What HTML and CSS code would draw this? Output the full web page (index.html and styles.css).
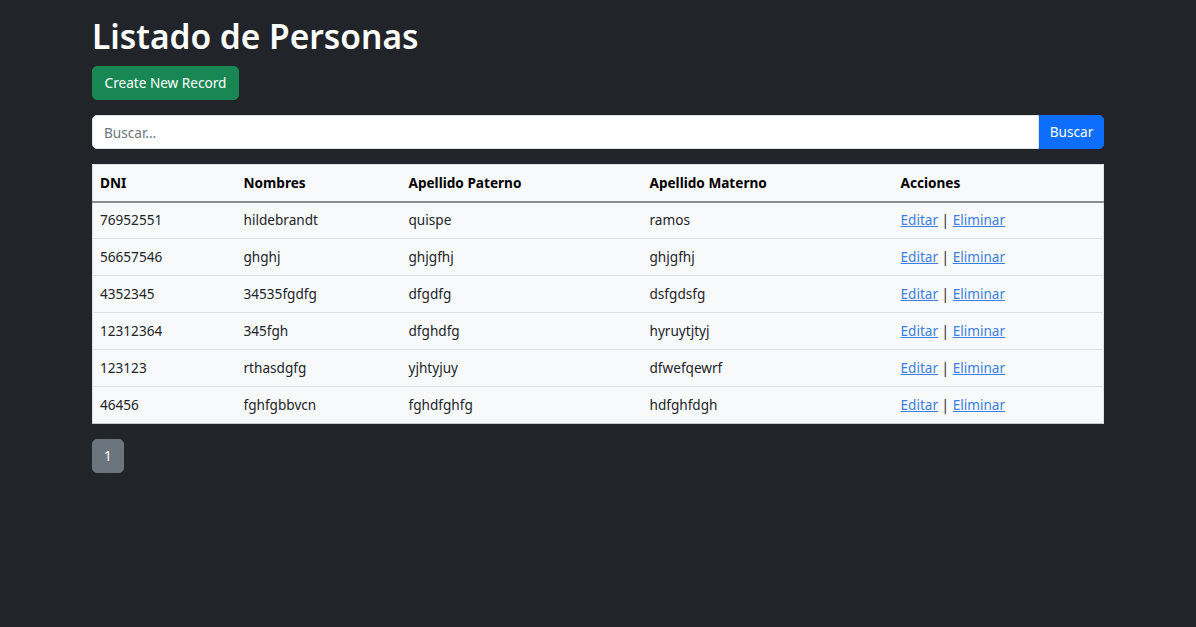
FILE: index.html
```html
<!DOCTYPE html>
<html lang="es">
<head>
<meta charset="utf-8">
<title>Listado de Personas</title>
<link rel="stylesheet" href="styles.css">
</head>
<body>
<div class="container">
  <h1 class="title">Listado de Personas</h1>
  <button class="btn btn-success">Create New Record</button>
  <form class="search">
    <input class="search-input" type="text" placeholder="Buscar...">
    <button class="btn btn-primary search-btn" type="button">Buscar</button>
  </form>
  <table class="table">
    <thead>
      <tr>
        <th class="c1">DNI</th>
        <th class="c2">Nombres</th>
        <th class="c3">Apellido Paterno</th>
        <th class="c4">Apellido Materno</th>
        <th class="c5">Acciones</th>
      </tr>
    </thead>
    <tbody>
      <tr><td>76952551</td><td>hildebrandt</td><td>quispe</td><td>ramos</td><td><a href="#">Editar</a> | <a href="#">Eliminar</a></td></tr>
      <tr><td>56657546</td><td>ghghj</td><td>ghjgfhj</td><td>ghjgfhj</td><td><a href="#">Editar</a> | <a href="#">Eliminar</a></td></tr>
      <tr><td>4352345</td><td>34535fgdfg</td><td>dfgdfg</td><td>dsfgdsfg</td><td><a href="#">Editar</a> | <a href="#">Eliminar</a></td></tr>
      <tr><td>12312364</td><td>345fgh</td><td>dfghdfg</td><td>hyruytjtyj</td><td><a href="#">Editar</a> | <a href="#">Eliminar</a></td></tr>
      <tr><td>123123</td><td>rthasdgfg</td><td>yjhtyjuy</td><td>dfwefqewrf</td><td><a href="#">Editar</a> | <a href="#">Eliminar</a></td></tr>
      <tr><td>46456</td><td>fghfgbbvcn</td><td>fghdfghfg</td><td>hdfghfdgh</td><td><a href="#">Editar</a> | <a href="#">Eliminar</a></td></tr>
    </tbody>
  </table>
  <nav class="pagination">
    <a class="page-link" href="#">1</a>
  </nav>
</div>
</body>
</html>
```
FILE: styles.css
```css
* { box-sizing: border-box; }
html, body { margin: 0; padding: 0; }
body {
  background: #212529;
  color: #212529;
  font-family: "Noto Sans", "Open Sans", sans-serif;
  font-size: 13.6px;
  line-height: 1.5;
  height: 627px;
}
.container {
  width: 1012px;
  margin-left: 92px;
  padding-top: 16px;
}
.title {
  color: #fff;
  font-size: 33.5px;
  font-weight: 600;
  line-height: 1.2;
  margin: 0 0 8px 0;
  height: 42px;
}
.btn {
  font-family: inherit;
  font-size: 13.6px;
  line-height: 1.5;
  border: 1px solid transparent;
  border-radius: 5px;
  color: #fff;
  padding: 5px 11px;
  cursor: pointer;
  white-space: nowrap;
}
.btn-success {
  background: #198754;
  border-color: #198754;
  height: 34px;
  width: 147px;
  display: block;
  text-align: center;
  padding: 5px 0;
}
.btn-primary {
  background: #0d6efd;
  border-color: #0d6efd;
}
.search {
  display: flex;
  margin: 15px 0 15px 0;
  height: 34px;
}
.search-input {
  flex: 1;
  font-family: inherit;
  font-size: 13.6px;
  border: 1px solid #dee2e6;
  border-radius: 5px 0 0 5px;
  padding: 5px 11px;
  background: #fff;
  color: #212529;
  outline: none;
}
.search-input::placeholder { color: #6c757d; }
.search-btn {
  border-radius: 0 5px 5px 0;
  width: 65px;
  padding: 5px 0;
  text-align: center;
}
.table {
  width: 100%;
  border-collapse: collapse;
  background: #f8f9fa;
  table-layout: fixed;
  border: 1px solid #dee2e6;
}
.table th, .table td {
  text-align: left;
  padding: 6px 7px;
  height: 37px;
  vertical-align: middle;
  border-bottom: 1px solid #dee2e6;
}
.table th {
  font-weight: 700;
  color: #000;
  border-bottom: 2px solid #8a8c8e;
}
.table td { color: #212529; }
.table tbody tr:last-child td { border-bottom: 1px solid #c8cbcf; }
.c1 { width: 144px; }
.c2 { width: 165px; }
.c3 { width: 241px; }
.c4 { width: 251px; }
.table a { color: #3d7fe0; text-decoration: underline; }
.pagination {
  display: flex;
  margin-top: 15px;
}
.page-link {
  display: flex;
  align-items: center;
  justify-content: center;
  width: 32px;
  height: 34px;
  background: #6c757d;
  border: 1px solid #6c757d;
  border-radius: 5px;
  color: #fff;
  text-decoration: none;
}
```
